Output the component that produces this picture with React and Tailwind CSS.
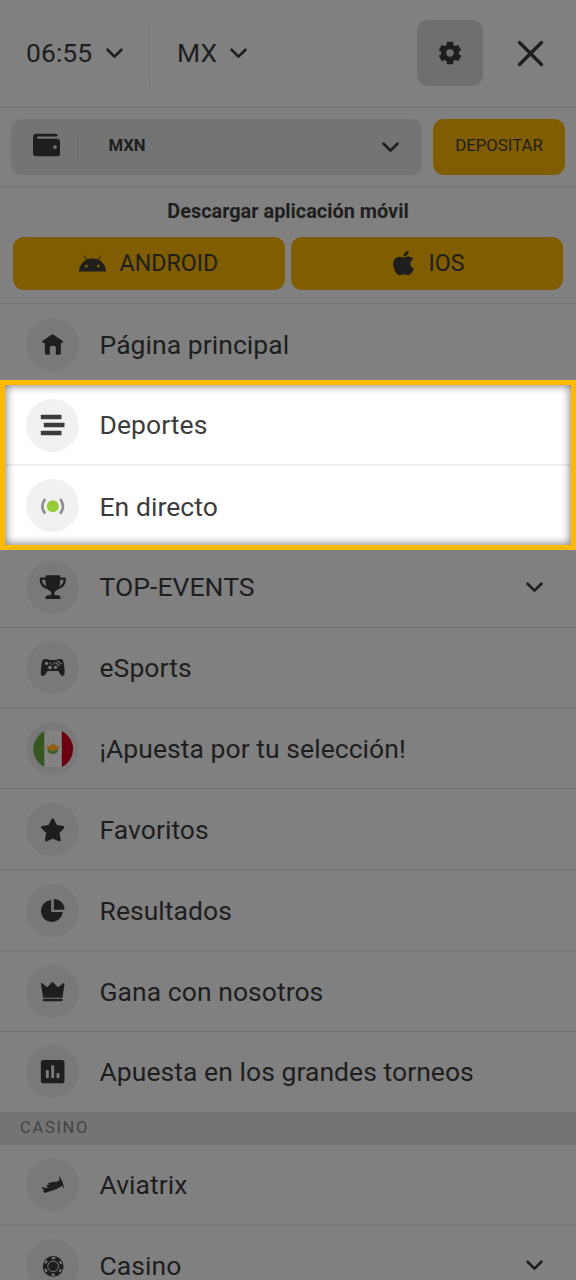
import React from 'react';
import { FaApple } from 'react-icons/fa';

function Chevron({ className = '' }) {
  return (
    <svg viewBox="0 0 17 11" className={`h-[11px] w-[17px] shrink-0 ${className}`} fill="none" stroke="#1e1e1e" strokeWidth="2.7" strokeLinecap="round" strokeLinejoin="round">
      <path d="M1.6 1.8 8.5 8.6 15.4 1.8" />
    </svg>
  );
}

// every menu icon shares one canvas that fills its round badge
function Glyph({ children }) {
  return (
    <svg viewBox="0 0 159 159" className="h-[53px] w-[53px]" fill="#1e1e1e">
      {children}
    </svg>
  );
}

const icons = {
  home: (
    <Glyph>
      <path d="M75 50q3-2 6 0l27 18q4 5 0 7h-5v30q0 5-5 5H88V88q0-5-9-5t-9 5v22H60q-5 0-5-5V75h-6q-4-2 0-7z" />
    </Glyph>
  ),
  sports: (
    <svg viewBox="0 0 159 159" className="h-[53px] w-[53px]" fill="#3c3c3c">
      <rect x="43" y="47" width="62" height="14" rx="2" />
      <rect x="52" y="71" width="62" height="14" rx="2" />
      <rect x="43" y="95" width="62" height="14" rx="2" />
    </svg>
  ),
  live: (
    <svg viewBox="0 0 159 159" className="h-[53px] w-[53px]" fill="none" stroke="#8c8c8c" strokeWidth="8">
      <circle cx="79" cy="82" r="18" fill="#95cb35" stroke="none" />
      <path d="M56 60q-17 22 0 44M101 60q17 22 0 44" />
    </svg>
  ),
  trophy: (
    <Glyph>
      <path d="M60 43h38q3 0 3 4v14q0 24-17 32v10h12q5 1 6 8v3H57v-3q1-7 6-8h11V93Q57 85 57 61V47q0-4 3-4z" />
      <path d="M60 53H43q0 24 23 29M98 53h17q0 24-23 29" fill="none" stroke="#1e1e1e" strokeWidth="7" strokeLinejoin="round" />
    </Glyph>
  ),
  gamepad: (
    <Glyph>
      <path d="M53 55q10-3 15 2h22q5-5 15-2 5 0 6 9 5 22 3 37-2 4-7 4-4-2-12-15H63q-7 13-13 15-6 0-7-5-1-15 3-35 2-10 7-10z" />
      <g fill="#7a7a7a">
        <circle cx="60" cy="67" r="5" />
        <circle cx="96" cy="62" r="3" />
        <circle cx="96" cy="73" r="3" />
        <circle cx="90" cy="67.500" r="3" />
        <circle cx="102" cy="67.500" r="3" />
        <circle cx="72" cy="66" r="2.500" />
        <circle cx="84" cy="66" r="2.500" />
        <circle cx="78" cy="70" r="2" />
        <path d="M68 73h5v4h4v5h-4v4h-5v-4h-4v-5h4z" />
        <circle cx="87" cy="79" r="5" />
      </g>
    </Glyph>
  ),
  mexico: (
    <Glyph>
      <path d="M54 27A60 60 0 0 0 54 135z" fill="#38561f" />
      <path d="M54 27h52v108H54z" fill="#828282" />
      <path d="M106 27A60 60 0 0 1 106 135z" fill="#6c0010" />
      <path d="M63 80q0 16 16 16t16-16z" fill="#3c602b" />
      <path d="M58 71l12 1 10-9 9 9 12-1-9 11q-6 5-13 5t-13-5z" fill="#935d14" />
    </Glyph>
  ),
  star: (
    <Glyph>
      <path d="M75 48q3-4 7 0l9 18 20 3q4 2 2 6L99 90l4 21q-1 5-6 4l-18-8-18 8q-5 1-6-4l4-21-15-15q-2-4 2-6l20-3z" />
    </Glyph>
  ),
  pie: (
    <Glyph>
      <path d="M74 48v36h35a33 33 0 1 1-35-36z" />
      <path d="M82 45a32 32 0 0 1 32 32H82z" />
    </Glyph>
  ),
  crown: (
    <Glyph>
      <path d="M43 55q2-2 4 0l15 12 14-15q2-1 4 0l14 15 16-12q4-2 4 2l-6 41H50z" />
      <path d="M49 101h59v5q0 3-3 3H52q-3 0-3-3z" />
    </Glyph>
  ),
  chart: (
    <Glyph>
      <rect x="43" y="45" width="71" height="70" rx="8" />
      <g fill="#7a7a7a">
        <rect x="58" y="75" width="9" height="25" rx="3" />
        <rect x="74" y="61" width="9" height="39" rx="3" />
        <rect x="90" y="84" width="9" height="16" rx="3" />
      </g>
    </Glyph>
  ),
  plane: (
    <Glyph>
      <path d="M45 88l6-1 5 4 10-4-7-3 1-3 10-1-8-3 14-5 14-1 10-5h6l4 12-5 7-16 9-34 11-5-5 2-4z" />
      <path d="M98 53q6 7 8 18 6 9 7 21-7-7-10-18-6-12-5-21z" />
    </Glyph>
  ),
  chip: (
    <Glyph>
      <circle cx="80" cy="82" r="31" />
      <circle cx="80" cy="82" r="16" fill="none" stroke="#7a7a7a" strokeWidth="3" />
      <circle cx="80" cy="82" r="25" fill="none" stroke="#7a7a7a" strokeWidth="6" strokeDasharray="10 16.18" strokeDashoffset="5" transform="rotate(30 80 82)" />
    </Glyph>
  ),
};

function MenuItem({ icon, label, light, chevron, className = '', textClass = '' }) {
  return (
    <div className={`flex items-start ${className}`}>
      <div className={`grid h-[53px] w-[53px] shrink-0 place-items-center rounded-full [&>svg]:translate-x-[0.5px] ${light ? 'bg-[#f1f1f1]' : 'bg-[#797979]'}`}>
        {icons[icon]}
      </div>
      <span className={`ml-[20.5px] flex-1 whitespace-nowrap text-[26.5px] leading-[53px] tracking-[0.05px] ${light ? 'text-[#3c3c3c]' : 'text-[#1e1e1e]'} ${textClass}`}>{label}</span>
      {chevron && <Chevron className="mr-[33px] mt-[21px]" />}
    </div>
  );
}

const items = [
  { icon: 'trophy', label: 'TOP-EVENTS', chevron: true, className: 'h-[78px] pl-[26px] pt-[11px] border-b border-[#6e6e6e]', textClass: '-mt-px' },
  { icon: 'gamepad', label: 'eSports', className: 'h-[81px] pl-[26px] pt-[13px] border-b-2 border-[#797979]' },
  { icon: 'mexico', label: '¡Apuesta por tu selección!', className: 'h-20 pl-[26px] pt-[13px] border-b border-[#727272]' },
  { icon: 'star', label: 'Favoritos', className: 'h-[82px] pl-[26px] pt-[14px] border-b-2 border-[#797979]' },
  { icon: 'pie', label: 'Resultados', className: 'h-[81px] pl-[26px] pt-[13px] border-b-2 border-[#797979]' },
  { icon: 'crown', label: 'Gana con nosotros', className: 'h-20 pl-[26px] pt-[13px] border-b border-[#6e6e6e]' },
  { icon: 'chart', label: 'Apuesta en los grandes torneos', className: 'h-20 pl-[26px] pt-[13px]' },
];

export default function App() {
  return (
    <div className="h-[1280px] w-[576px] overflow-hidden bg-[#808080] font-['Roboto',sans-serif] text-[#1e1e1e]">
      <header className="flex h-[108px] border-b-2 border-[#787878] pt-5">
        <div className="flex h-[66px] w-[150px] items-center border-r border-[#777777] pl-[26px] text-[26.5px] tracking-[0.05px]">
          06:55
          <Chevron className="ml-[14px]" />
        </div>
        <div className="flex h-[66px] flex-1 items-center pl-[27px] text-[26.5px] tracking-[0.05px]">
          MX
          <Chevron className="ml-[13px]" />
        </div>
        <button className="grid h-[66px] w-[66px] place-items-center rounded-[11px] bg-[#6f6f6f]">
          <svg viewBox="0 0 24 24" className="h-6 w-6" fill="#1e1e1e">
            <path d="M12 .8v22.400M2.300 6.400l19.400 11.200M2.300 17.600l19.400-11.200" stroke="#1e1e1e" strokeWidth="6.400" />
            <circle cx="12" cy="12" r="9" />
            <circle cx="12" cy="12" r="3.700" fill="#6f6f6f" />
          </svg>
        </button>
        <button className="mr-[32px] ml-[34px] flex h-[66px] w-[27px] items-center">
          <svg viewBox="0 0 27 27" className="h-[27px] w-[27px]" fill="none" stroke="#1e1e1e" strokeWidth="3.300" strokeLinecap="round">
            <path d="M2.500 2.500l22 22M24.500 2.500l-22 22" />
          </svg>
        </button>
      </header>

      <div className="flex h-[79px] gap-[11px] border-b border-[#737373] px-[11px] pt-[11px]">
        <div className="flex h-[56px] w-[411px] items-center rounded-[11px] bg-[#747474] pl-[22px]">
          <svg viewBox="0 0 27 23" className="h-[23px] w-[27px] -translate-y-[2.500px]" fill="#1e1e1e">
            <path d="M3.500 0H23q1.500 0 1.500 1.500T23 3H5q-1 0-1 1t1 1.300h19.500Q27 5.500 27 8v12q0 3-3 3H3q-3 0-3-3V3.500Q0 0 3.500 0z" />
            <circle cx="22" cy="13.600" r="1.900" fill="#747474" />
          </svg>
          <div className="ml-[17px] h-[26px] w-px bg-[#6e6e6e]" />
          <span className="ml-[30.500px] flex-1 -translate-y-px text-[16.700px] font-bold">MXN</span>
          <Chevron className="mr-[23px]" />
        </div>
        <button className="h-[56px] w-[132px] rounded-[11px] bg-[#805d00] pb-0.5 text-[16.800px]">DEPOSITAR</button>
      </div>

      <div className="h-[117px] border-b border-[#737373] px-[13px] pt-3">
        <div className="h-[38px] text-center text-[19.900px] font-bold leading-[25px]">Descargar aplicación móvil</div>
        <div className="flex gap-1.5">
          <button className="flex h-[53px] w-[272px] items-center rounded-[11px] bg-[#805d00] pl-[66px] text-[23.200px]">
            <svg viewBox="0 0 81 49" className="mr-[13.500px] h-[16.500px] w-[27px]" fill="#1e1e1e">
              <path d="M0 49Q2 24 22 14L14 2q1-3 3 0l8 11q15-6 31 0l8-11q2-3 3 0l-8 12q20 10 22 35z" />
              <circle cx="22" cy="33" r="4.500" fill="#805d00" />
              <circle cx="58" cy="33" r="4.500" fill="#805d00" />
            </svg>
            ANDROID
          </button>
          <button className="flex h-[53px] w-[272px] items-center rounded-[11px] bg-[#805d00] pl-[98.500px] text-[23.200px]">
            <FaApple className="mr-[12px] h-[28px] w-[27px] -translate-y-px text-[#1e1e1e]" />
            IOS
          </button>
        </div>
      </div>

      <MenuItem icon="home" label="Página principal" className="h-[76px] pl-[26px] pt-[14px]" />

      <div className="h-[170px] border-[5px] border-[#ffb900] bg-white shadow-[inset_0_0_9px_1px_#00000080]">
        <MenuItem icon="sports" label="Deportes" light className="h-[81px] border-b-2 border-black/[0.06] pl-[21px] pt-[14px]" textClass="-mt-px" />
        <MenuItem icon="live" label="En directo" light className="h-[79px] pl-[21px] pt-[13px]" textClass="pt-px" />
      </div>

      {items.map((item) => (
        <MenuItem key={item.label} {...item} />
      ))}

      <div className="h-[33px] bg-[#747474] pl-5 text-[16.500px] leading-[32px] tracking-[1.700px] text-[#444444]">CASINO</div>
      <MenuItem icon="plane" label="Aviatrix" className="h-[81px] border-b-2 border-[#797979] pl-[26px] pt-[13px]" />
      <MenuItem icon="chip" label="Casino" chevron className="h-[54px] pl-[26px] pt-[13px]" />
    </div>
  );
}
